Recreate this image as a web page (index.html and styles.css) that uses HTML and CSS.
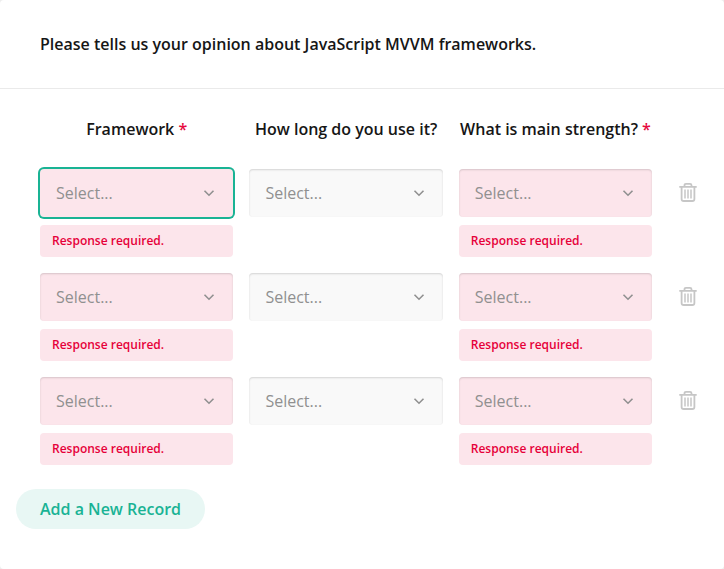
FILE: index.html
```html
<!DOCTYPE html>
<html lang="en">
<head>
<meta charset="utf-8">
<title>Survey</title>
<link rel="stylesheet" href="styles.css">
</head>
<body>
<svg class="defs" aria-hidden="true">
  <symbol id="chevron" viewBox="0 0 16 16"><path d="M3.500 5.700 8 10.200l4.500-4.500" fill="none" stroke="currentColor" stroke-width="1.600"/></symbol>
  <symbol id="trash" viewBox="0 0 20 20"><path d="M1.300 4.800h17.400M6.500 4.500V3.300q0-1.500 1.500-1.500h4q1.500 0 1.500 1.500v1.200M3.600 5v11.900q0 2.100 2.100 2.100h8.600q2.100 0 2.100-2.100V5" fill="none" stroke="currentColor" stroke-width="1.800"/><path d="M7 7.500v9M10 7.500v9M13 7.500v9" stroke="currentColor" stroke-width="1.500"/></symbol>
</svg>
<main class="question">
  <header class="title">Please tells us your opinion about JavaScript MVVM frameworks.</header>
  <section class="panel">
    <div class="row heads">
      <div>Framework <span class="req">*</span></div><div>How long do you use it?</div><div class="wide">What is main strength? <span class="req">*</span></div>
    </div>
    <div class="row">
      <div class="cell"><div class="select invalid focused">Select...<svg><use href="#chevron"/></svg></div><div class="error">Response required.</div></div>
      <div class="cell"><div class="select">Select...<svg><use href="#chevron"/></svg></div></div>
      <div class="cell"><div class="select invalid">Select...<svg><use href="#chevron"/></svg></div><div class="error">Response required.</div></div>
      <svg class="trash"><use href="#trash"/></svg>
    </div>
    <div class="row">
      <div class="cell"><div class="select invalid">Select...<svg><use href="#chevron"/></svg></div><div class="error">Response required.</div></div>
      <div class="cell"><div class="select">Select...<svg><use href="#chevron"/></svg></div></div>
      <div class="cell"><div class="select invalid">Select...<svg><use href="#chevron"/></svg></div><div class="error">Response required.</div></div>
      <svg class="trash"><use href="#trash"/></svg>
    </div>
    <div class="row">
      <div class="cell"><div class="select invalid">Select...<svg><use href="#chevron"/></svg></div><div class="error">Response required.</div></div>
      <div class="cell"><div class="select">Select...<svg><use href="#chevron"/></svg></div></div>
      <div class="cell"><div class="select invalid">Select...<svg><use href="#chevron"/></svg></div><div class="error">Response required.</div></div>
      <svg class="trash"><use href="#trash"/></svg>
    </div>
  </section>
  <button class="add">Add a New Record</button>
</main>
</body>
</html>
```
FILE: styles.css
```css
* { box-sizing: border-box; }
body { margin: 0; background: #ededed; font: 16px/24px "Open Sans", sans-serif; color: #161616; }
.defs { display: none; }
.question { height: 569px; border-radius: 4px; background: #fff; }
.title { height: 89px; padding: 32px 40px; border-bottom: 1px solid #eaeaea; font-weight: 600; }
.panel { padding: 28px 26px 0 40px; }
.row { display: grid; grid-template-columns: 193.400px 193.400px 193.400px 20px; column-gap: 16px; height: 104px; }
.heads { height: 52px; font-weight: 600; text-align: center; white-space: nowrap; }
.wide { margin: 0 -4px; }
.req { color: #e60a3e; }
.select { display: flex; align-items: center; justify-content: space-between; height: 48px; padding: 0 16px; border-radius: 4px; background: #f9f9f9; color: #909090; box-shadow: inset 0 1px 2px rgba(0,0,0,.15); }
.select svg { width: 16px; height: 16px; }
.invalid { background: #fce5eb; }
.focused { box-shadow: 0 0 0 2px #19b394; }
.error { height: 32px; margin-top: 8px; padding: 0 12px; border-radius: 4px; background: #fce5eb; color: #e60039; font-size: 12px; line-height: 32px; font-weight: 600; }
.trash { width: 20px; height: 20px; margin: 13px 0 0 9.800px; color: #c6c6c6; }
.add { display: block; height: 40px; margin: 8px 0 0 16px; padding: 0 24px; border: 0; border-radius: 20px; background: #e8f7f4; color: #19b394; font: 600 16px/24px "Open Sans", sans-serif; }
```
